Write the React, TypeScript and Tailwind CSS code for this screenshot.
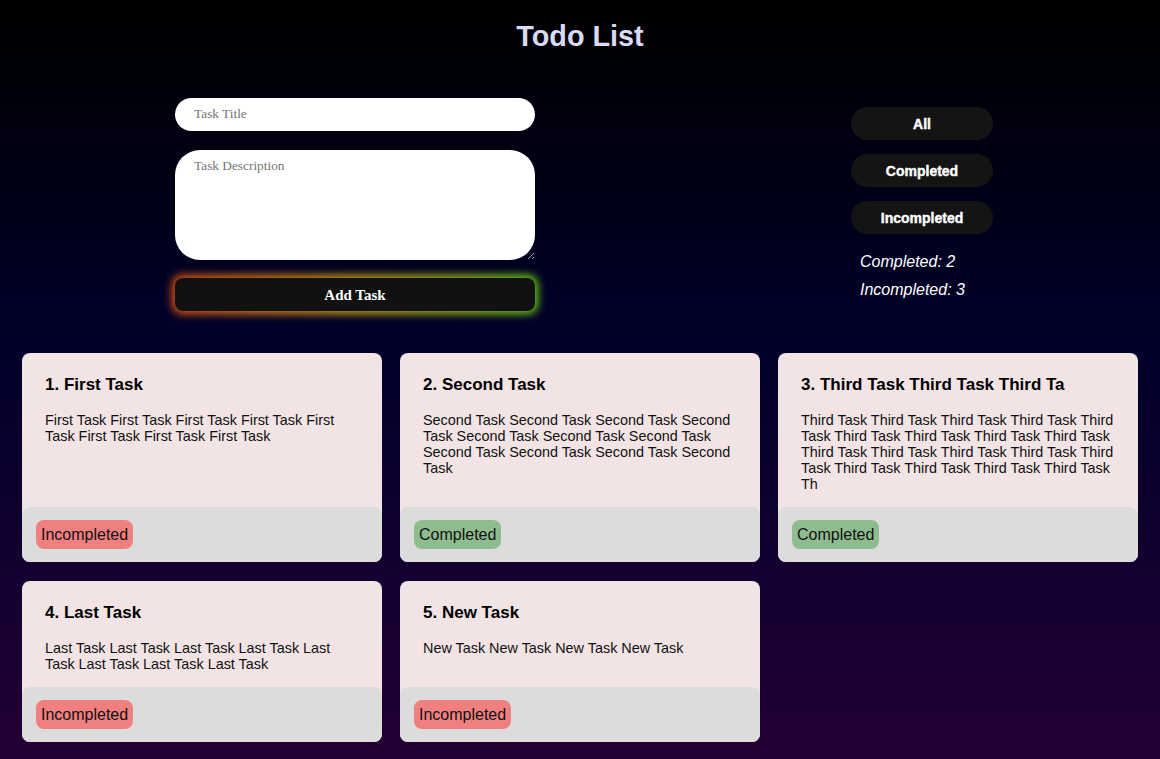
import React from "react";

type Task = {
  id: number;
  title: string;
  description: string;
  completed: boolean;
};

const tasks: Task[] = [
  {
    id: 1,
    title: "First Task",
    description: "First Task ".repeat(8).trim(),
    completed: false,
  },
  {
    id: 2,
    title: "Second Task",
    description: "Second Task ".repeat(11).trim(),
    completed: true,
  },
  {
    id: 3,
    title: "Third Task Third Task Third Ta",
    description: "Third Task ".repeat(18) + "Th",
    completed: true,
  },
  {
    id: 4,
    title: "Last Task",
    description: "Last Task ".repeat(8).trim(),
    completed: false,
  },
  {
    id: 5,
    title: "New Task",
    description: "New Task ".repeat(4).trim(),
    completed: false,
  },
];

const sans = "font-['Liberation_Sans',Arial,sans-serif]";
const serif = "font-['Liberation_Serif','Times_New_Roman',serif]";

const TaskCard: React.FC<{ task: Task; index: number }> = ({ task, index }) => (
  <div className="flex flex-col rounded-lg bg-[#f2e4e4]">
    <div className="flex-1 px-[23px] pt-[22px] pb-[15px]">
      <h3 className="overflow-hidden whitespace-nowrap text-[17px] leading-[20px] font-bold text-black">
        {index + 1}. {task.title}
      </h3>
      <p className="mt-[17px] text-[14.4px] leading-[16px] text-[#111]">
        {task.description}
      </p>
    </div>
    <div className="rounded-lg bg-[#dcdcdc] px-[14px] py-[13px]">
      <span
        className={`inline-block rounded-lg px-[5px] py-[5px] text-[16px] leading-[19px] text-[#111] ${
          task.completed ? "bg-[#8fbc8f]" : "bg-[#f08080]"
        }`}
      >
        {task.completed ? "Completed" : "Incompleted"}
      </span>
    </div>
  </div>
);

export default function App() {
  const completed = tasks.filter((t) => t.completed).length;
  const incompleted = tasks.length - completed;

  return (
    <div
      className={`min-h-screen bg-[linear-gradient(to_bottom,#000000_0%,#00002a_45%,#230036_100%)] pb-4 ${sans}`}
    >
      <h1 className="pt-[20px] text-center text-[28.8px] leading-[32px] font-bold text-[#dadaf5]">
        Todo List
      </h1>

      <div className="mt-[46px] flex items-start pl-[175px]">
        <div className="flex w-[360px] flex-col">
          <input
            type="text"
            placeholder="Task Title"
            className={`h-[33px] rounded-full bg-white px-[19px] pb-[1px] text-[13.33px] text-black outline-none placeholder:text-[#757575] ${serif}`}
          />
          <textarea
            placeholder="Task Description"
            className={`mt-[19px] h-[110px] rounded-[25px] bg-white px-[19px] pt-[6px] text-[13.33px] text-black outline-none placeholder:text-[#757575] ${serif}`}
          />
          <div className="relative mt-[18px]">
            <div className="absolute -inset-[3px] rounded-[10px] bg-gradient-to-r from-[#e0500f] via-[#c8a010] to-[#66cc11] blur-[4px]" />
            <button
              className={`relative h-[33px] w-full rounded-lg bg-[#111] pt-[1px] text-[15px] font-bold text-white ${serif}`}
            >
              Add Task
            </button>
          </div>
        </div>

        <div className="ml-[316px] mt-[9px] flex w-[142px] flex-col">
          {["All", "Completed", "Incompleted"].map((label, i) => (
            <button
              key={label}
              className={`h-[33px] w-full rounded-full bg-[#141414] pt-[2px] text-[14px] font-bold text-white [-webkit-text-stroke:0.4px_white] ${
                i > 0 ? "mt-[14px]" : ""
              }`}
            >
              {label}
            </button>
          ))}
          <div className="mt-[14px] pl-[9px] text-[16px] leading-[28px] italic text-white">
            <p>Completed: {completed}</p>
            <p>Incompleted: {incompleted}</p>
          </div>
        </div>
      </div>

      <div className="mt-[42px] grid grid-cols-3 gap-x-[18px] gap-y-[19px] px-[22px]">
        {tasks.map((task, i) => (
          <TaskCard key={task.id} task={task} index={i} />
        ))}
      </div>
    </div>
  );
}
